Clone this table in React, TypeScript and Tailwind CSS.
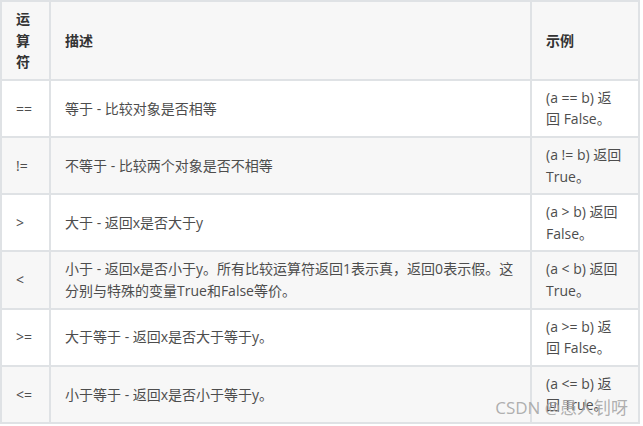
const rows = [
  { op: "==", desc: "等于 - 比较对象是否相等", ex: "(a == b) 返回 False。" },
  { op: "!=", desc: "不等于 - 比较两个对象是否不相等", ex: "(a != b) 返回 True。" },
  { op: ">", desc: "大于 - 返回x是否大于y", ex: "(a > b) 返回 False。" },
  {
    op: "<",
    desc: "小于 - 返回x是否小于y。所有比较运算符返回1表示真，返回0表示假。这分别与特殊的变量True和False等价。",
    ex: "(a < b) 返回 True。"
  },
  { op: ">=", desc: "大于等于 - 返回x是否大于等于y。", ex: "(a >= b) 返回 False。" },
  { op: "<=", desc: "小于等于 - 返回x是否小于等于y。", ex: "(a <= b) 返回 True。" }
];

const cell = "border-2 border-[#dfe2e5] px-[14px] py-[6px] align-middle text-left";

export default function App() {
  return (
    <div
      className="relative h-[426px] w-[643px] overflow-hidden bg-white text-[14px] leading-[21.6px] text-[#4d4d4d]"
      style={{ fontFamily: '"Open Sans", "Noto Sans CJK SC", sans-serif' }}
    >
      <table className="w-[640px] table-fixed border-collapse">
        <colgroup>
          <col className="w-[49px]" />
          <col className="w-[481px]" />
          <col className="w-[108px]" />
        </colgroup>
        <thead>
          <tr className="bg-[#f7f7f7]">
            <th className={`${cell} font-bold text-[#333]`}>运算符</th>
            <th className={`${cell} font-bold text-[#333]`}>描述</th>
            <th className={`${cell} font-bold text-[#333]`}>示例</th>
          </tr>
        </thead>
        <tbody>
          {rows.map((r, i) => (
            <tr key={r.op} className={i % 2 === 1 ? "bg-[#f7f7f7]" : "bg-white"}>
              <td className={cell}>{r.op}</td>
              <td className={cell}>{r.desc}</td>
              <td className={cell}>{r.ex}</td>
            </tr>
          ))}
        </tbody>
      </table>
      {/* watermark sits over the last row, as in the screenshot */}
      <span className="pointer-events-none absolute bottom-[8px] right-[15px] text-[17px] leading-5 text-[#a6a6a6]/90">
        CSDN @愚人钊呀
      </span>
    </div>
  );
}
